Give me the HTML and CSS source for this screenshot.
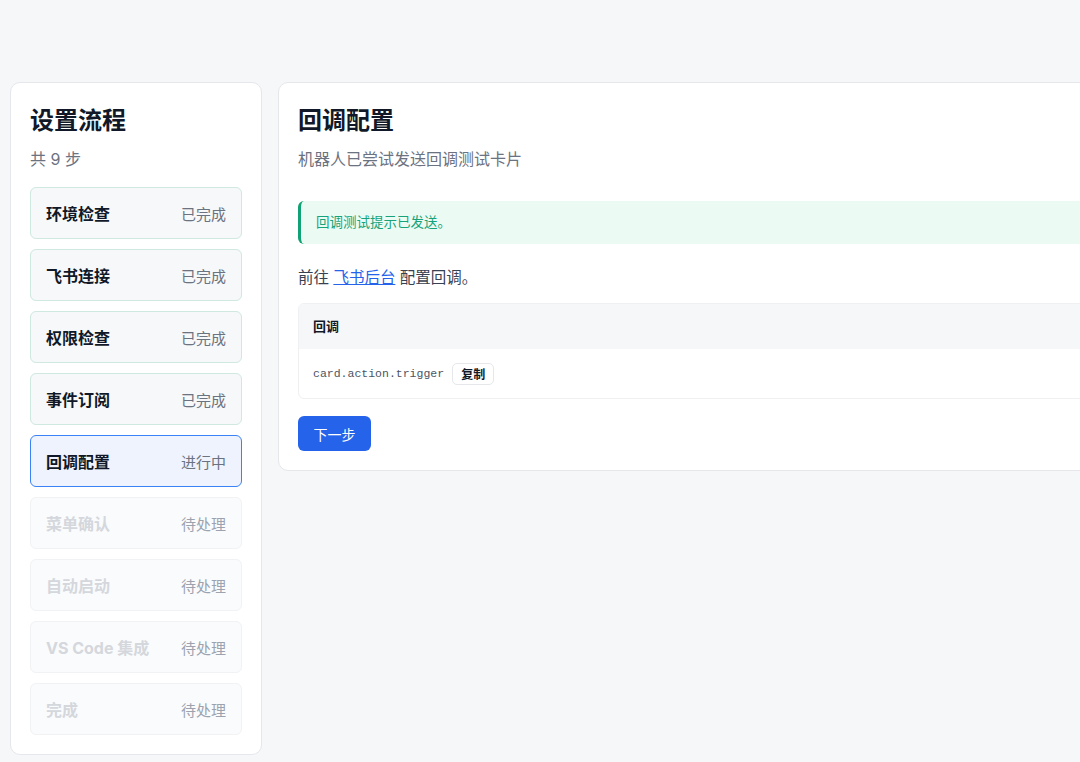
FILE: index.html
```html
<!DOCTYPE html>
<html lang="zh-CN">
<head>
<meta charset="UTF-8">
<meta name="viewport" content="width=device-width, initial-scale=1.0">
<title>设置流程</title>
<link rel="stylesheet" href="styles.css">
</head>
<body>

<div class="layout">
  <!-- 左侧步骤列表 -->
  <aside class="sidebar">
    <h2 class="sidebar-title">设置流程</h2>
    <p class="sidebar-sub">共 9 步</p>
    <ul class="steps">
      <li class="step done"><span class="step-name">环境检查</span><span class="step-state">已完成</span></li>
      <li class="step done"><span class="step-name">飞书连接</span><span class="step-state">已完成</span></li>
      <li class="step done"><span class="step-name">权限检查</span><span class="step-state">已完成</span></li>
      <li class="step done"><span class="step-name">事件订阅</span><span class="step-state">已完成</span></li>
      <li class="step active"><span class="step-name">回调配置</span><span class="step-state">进行中</span></li>
      <li class="step pending"><span class="step-name">菜单确认</span><span class="step-state">待处理</span></li>
      <li class="step pending"><span class="step-name">自动启动</span><span class="step-state">待处理</span></li>
      <li class="step pending"><span class="step-name">VS Code 集成</span><span class="step-state">待处理</span></li>
      <li class="step pending"><span class="step-name">完成</span><span class="step-state">待处理</span></li>
    </ul>
  </aside>

  <!-- 当前步骤 -->
  <main class="panel">
    <h2 class="panel-title">回调配置</h2>
    <p class="panel-sub">机器人已尝试发送回调测试卡片</p>

    <div class="notice success">回调测试提示已发送。</div>

    <p class="hint">前往 <a href="#" class="link">飞书后台</a> 配置回调。</p>

    <div class="info-box">
      <div class="info-head">回调</div>
      <div class="info-row">
        <code class="code">card.action.trigger</code>
        <button class="copy-button">复制</button>
      </div>
    </div>

    <button class="next-button">下一步</button>
  </main>
</div>

</body>
</html>
```

FILE: styles.css
```css
body {
  margin: 0;
  background: #f6f7f9;
  color: #111827;
  font-family: Inter, "Noto Sans CJK SC", sans-serif;
  overflow: hidden;
}

.layout {
  display: flex;
  align-items: flex-start;
  gap: 16px;
  padding: 82px 0 0 10px;
  width: 1300px;
}

.sidebar, .panel {
  background: #fff;
  border: 1px solid #e5e7eb;
  border-radius: 10px;
  box-sizing: border-box;
}

.sidebar {
  width: 252px;
  flex-shrink: 0;
  padding: 20px 19px 19px;
}

.sidebar-title, .panel-title {
  margin: 0;
  font-size: 24px;
  font-weight: 700;
  line-height: 36px;
  color: #111827;
}

.sidebar-sub, .panel-sub {
  margin: 9px 0 0;
  font-size: 16px;
  line-height: 22px;
  color: #6b7280;
}

.steps {
  list-style: none;
  margin: 17px 0 0;
  padding: 0;
  display: flex;
  flex-direction: column;
  gap: 10px;
}

.step {
  display: flex;
  justify-content: space-between;
  align-items: center;
  height: 52px;
  box-sizing: border-box;
  padding: 0 15px;
  border: 1px solid #e5e7eb;
  border-radius: 6px;
  font-size: 15px;
}

.step-name {
  font-weight: 700;
  font-size: 16px;
}

.step-state {
  color: #6b7280;
}

.step.done {
  background: #f6f8fa;
  border-color: #cfe8e0;
}

.step.active {
  background: #eef3fe;
  border-color: #3b82f6;
}

.step.pending {
  background: #fafbfc;
  border-color: #f1f2f4;
}

.step.pending .step-name {
  color: #d4d7dc;
}

.step.pending .step-state {
  color: #9ca3af;
}

.panel {
  width: 900px;
  flex-shrink: 0;
  padding: 20px 19px 19px;
}

.notice {
  margin-top: 31px;
  padding: 12px 15px;
  font-size: 13.5px;
  line-height: 19px;
  border-radius: 6px;
}

.success {
  background: #ebfbf4;
  color: #16a37a;
  border-left: 3px solid #10a274;
}

.hint {
  margin: 23px 0 0;
  font-size: 15.5px;
  line-height: 22px;
  color: #374151;
}

.link {
  color: #2563eb;
  text-decoration: underline;
}

.info-box {
  margin-top: 14px;
  border: 1px solid #eff0f2;
  border-radius: 6px;
  overflow: hidden;
}

.info-head {
  background: #f6f7f9;
  height: 45px;
  line-height: 45px;
  padding: 0 14px;
  font-size: 13px;
  font-weight: 700;
}

.info-row {
  display: flex;
  align-items: center;
  gap: 8px;
  height: 49px;
  padding: 0 14px;
}

.code {
  font-family: "Liberation Mono", monospace;
  font-size: 11.5px;
  color: #4b5563;
}

.copy-button {
  height: 22px;
  padding: 0 8px;
  font-size: 12px;
  font-weight: 700;
  font-family: inherit;
  background: #fff;
  color: #111827;
  border: 1px solid #e5e7eb;
  border-radius: 5px;
}

.next-button {
  margin-top: 17px;
  width: 73px;
  height: 35px;
  border: none;
  border-radius: 6px;
  background: #2563eb;
  color: #fff;
  font-size: 14px;
  font-family: inherit;
  cursor: pointer;
}
```
